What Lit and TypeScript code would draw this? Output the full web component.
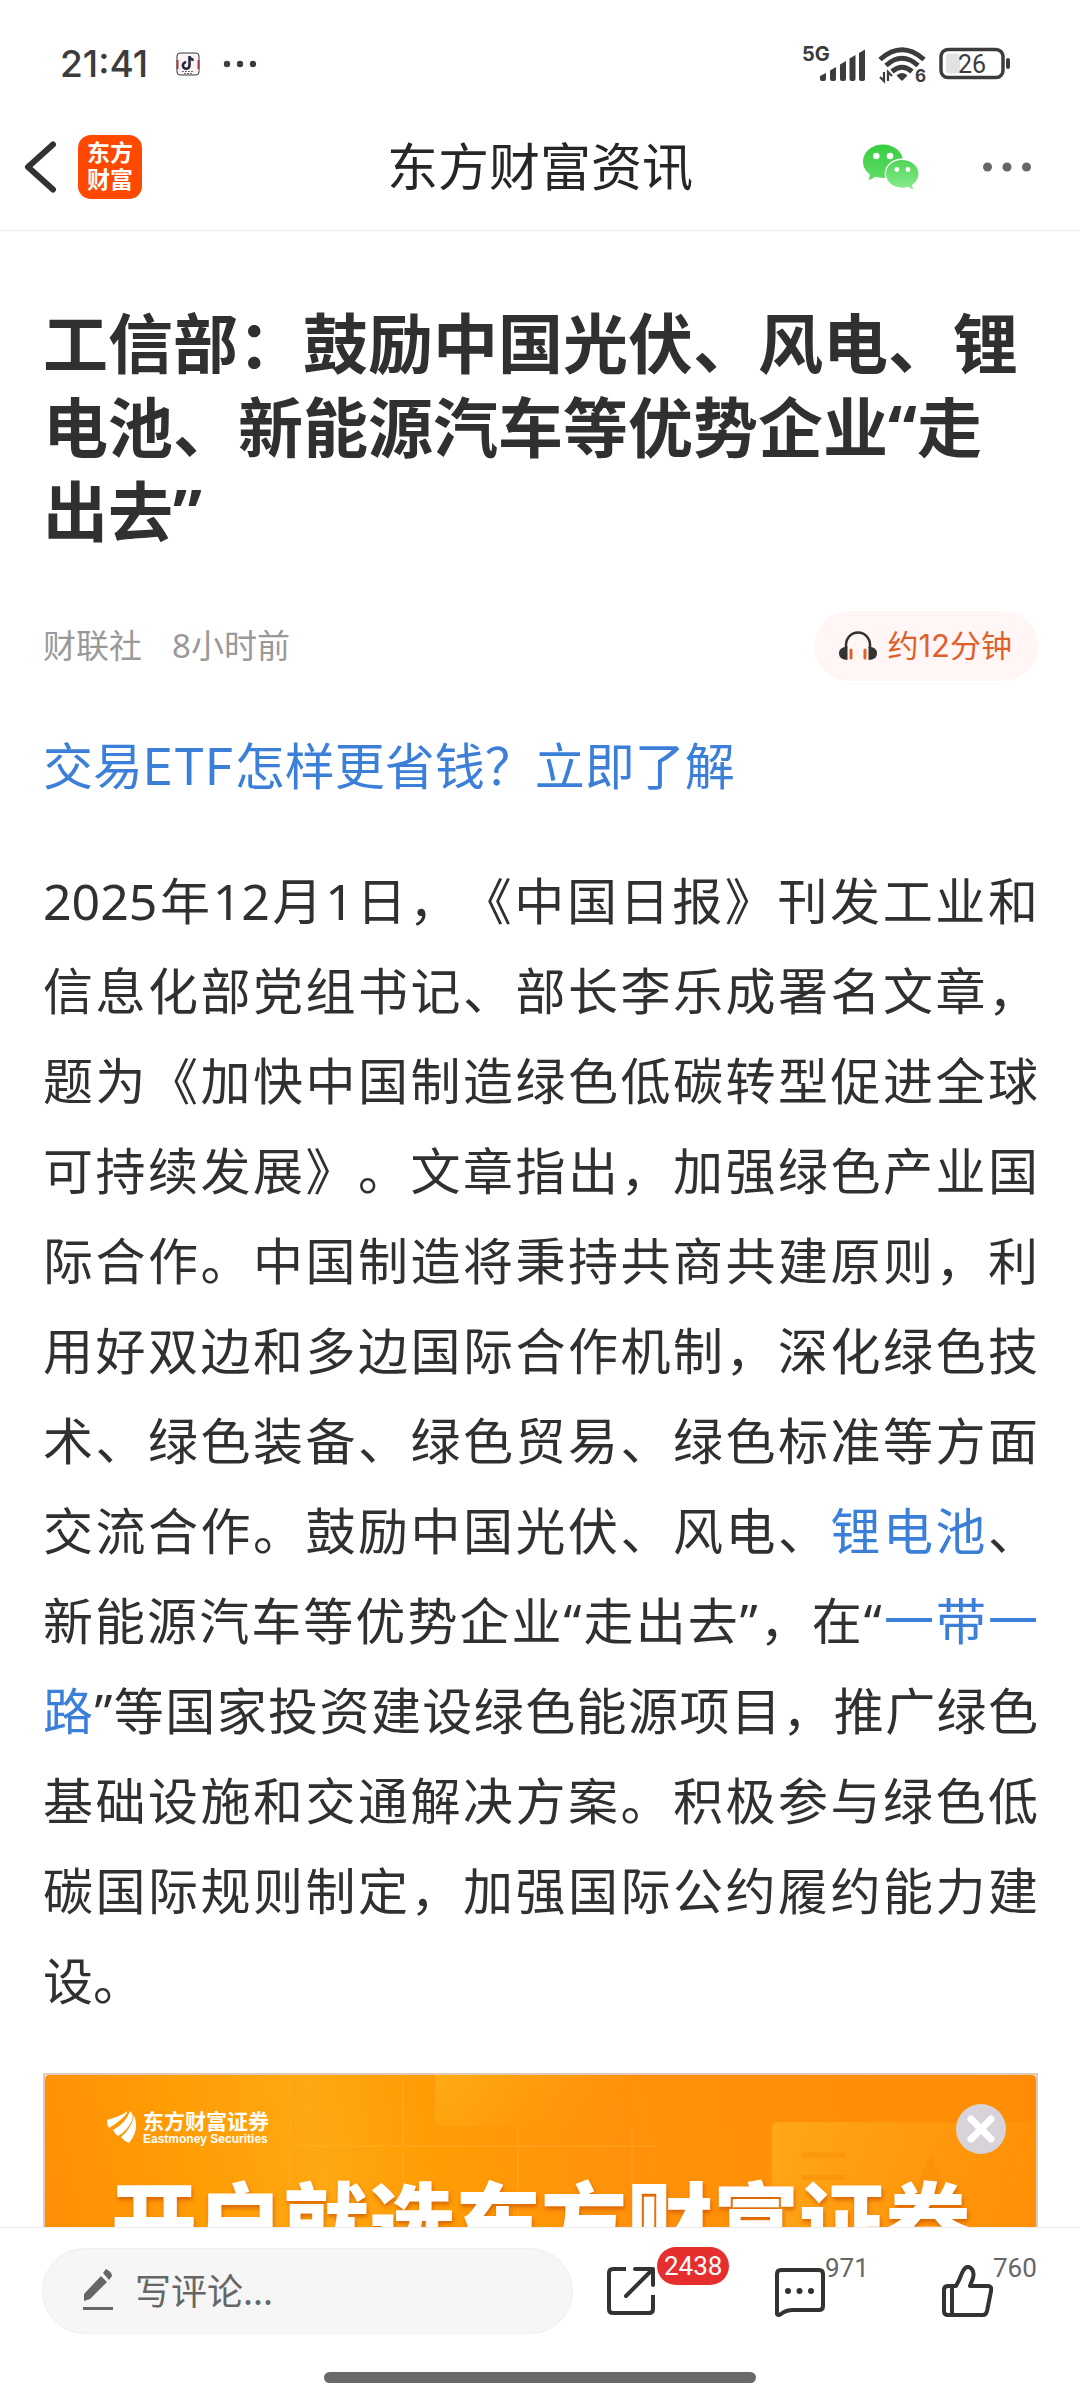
import { LitElement, css, html, svg } from "lit";
import { customElement, property } from "lit/decorators.js";

const BODY_BEFORE =
  "2025年12月1日，《中国日报》刊发工业和信息化部党组书记、部长李乐成署名文章，题为《加快中国制造绿色低碳转型促进全球可持续发展》。文章指出，加强绿色产业国际合作。中国制造将秉持共商共建原则，利用好双边和多边国际合作机制，深化绿色技术、绿色装备、绿色贸易、绿色标准等方面交流合作。鼓励中国光伏、风电、";
const BODY_MIDDLE = "、新能源汽车等优势企业“走出去”，在“";
const BODY_AFTER =
  "”等国家投资建设绿色能源项目，推广绿色基础设施和交通解决方案。积极参与绿色低碳国际规则制定，加强国际公约履约能力建设。";

@customElement("status-bar")
class StatusBar extends LitElement {
  static styles = css`
    :host {
      display: flex;
      align-items: center;
      justify-content: space-between;
      height: 80px;
      padding: 24px 69px 0 60px;
      color: #3c3c3c;
    }
    .group {
      display: flex;
      align-items: center;
    }
    .time {
      font: 500 37px/48px Inter, sans-serif;
      margin-right: 28px;
    }
    .dots {
      margin-left: 22px;
    }
    .right {
      gap: 13px;
    }
    .label {
      font-family: Inter, sans-serif;
      font-weight: 700;
      fill: currentColor;
    }
    .level {
      font-family: Roboto, sans-serif;
      fill: currentColor;
    }
    svg {
      display: block;
      overflow: visible;
    }
  `;

  render() {
    return html`
      <div class="group">
        <span class="time">21:41</span>
        <svg width="24" height="24" viewBox="0 0 24 24">
          <rect x="1" y="1" width="22" height="22" rx="3" fill="#fdf3f2" stroke="#34384a" stroke-width="1" />
          <path d="M1.5 8v9M22.5 8v9" stroke="#a83a44" stroke-width="2" />
          <path d="M13.5 4v9.5a3.3 3.3 0 1 1-3.3-3.3M13.5 4.5c.5 2 2 3.2 4.2 3.4" fill="none" stroke="#262a40" stroke-width="2.6" />
          <path d="M6 19.5h12M8 21.5h8" stroke="#70707c" stroke-width="1" stroke-dasharray="2 1" />
        </svg>
        <svg class="dots" width="36" height="8" viewBox="0 0 36 8" fill="currentColor">
          <circle cx="5" cy="4" r="3.2" /><circle cx="18" cy="4" r="3.2" /><circle cx="31" cy="4" r="3.2" />
        </svg>
      </div>
      <div class="group right">
        <svg width="62" height="36" viewBox="0 0 62 36" fill="currentColor">
          <text class="label" x="-1" y="15" font-size="20">5G</text>
          <path d="M17 30l6-3v6a2 2 0 0 1-2 2h-2a2 2 0 0 1-2-2zM27 24.5l6-3.5v12a2 2 0 0 1-2 2h-2a2 2 0 0 1-2-2zM37 18.5l6-3.5v18a2 2 0 0 1-2 2h-2a2 2 0 0 1-2-2zM46.5 12.5l6-3.500v24a2 2 0 0 1-2 2h-2a2 2 0 0 1-2-2zM56 7l6-3.5v29.5a2 2 0 0 1-2 2h-2a2 2 0 0 1-2-2z" />
        </svg>
        <svg width="48" height="36" viewBox="0 0 48 36">
          <g fill="none" stroke="currentColor" stroke-width="5">
            <path d="M2 13.5Q24-6 46 13.5" />
            <path d="M8 19.5Q24 5 40 19.5" />
            <path d="M14 25.5Q24 17 34 25.5" />
          </g>
          <path d="M24 34l-4.5-4.5q4.5-3.5 9 0z" fill="currentColor" stroke="currentColor" stroke-width="1.5" stroke-linejoin="round" />
          <path d="M6 26v9l-4-4M10 35v-9l4 4" fill="none" stroke="currentColor" stroke-width="2.2" />
          <text class="label" x="37" y="36" font-size="17">6</text>
        </svg>
        <svg width="72" height="36" viewBox="0 0 72 36">
          <rect x="2" y="3.5" width="62" height="28" rx="7" fill="none" stroke="currentColor" stroke-width="3.5" />
          <rect x="7" y="7.5" width="14" height="20" rx="3" fill="#e2e2e2" />
          <rect x="67" y="12" width="4" height="11" rx="2" fill="currentColor" />
          <text class="level" x="19" y="26.500" font-size="25">26</text>
        </svg>
      </div>
    `;
  }
}

@customElement("app-header")
class AppHeader extends LitElement {
  static styles = css`
    :host {
      display: grid;
      grid-template-columns: 1fr auto 1fr;
      align-items: center;
      height: 126px;
      border-bottom: 1px solid #ececec;
      padding: 0 46px 0 22px;
      color: #262626;
    }
    .left,
    .right {
      display: flex;
      align-items: center;
    }
    .left {
      gap: 20px;
    }
    .right {
      justify-content: flex-end;
      gap: 62px;
    }
    button {
      border: 0;
      padding: 0;
      background: none;
      color: inherit;
      display: block;
    }
    svg {
      display: block;
    }
    .logo {
      display: grid;
      place-content: center;
      box-sizing: border-box;
      width: 64px;
      height: 64px;
      padding-bottom: 4px;
      border-radius: 13px;
      background: #ff4800;
      color: #fff;
      font: 700 23px/27px "Noto Sans CJK SC", sans-serif;
      text-decoration: none;
    }
    h1 {
      margin: 0 -24px 0 0;
      padding-bottom: 6px;
      font: 400 51px/72px "Noto Sans CJK SC", sans-serif;
    }
  `;

  render() {
    return html`
      <div class="left">
        <button aria-label="返回">
          <svg width="36" height="56" viewBox="0 0 36 56" fill="none" stroke="#333" stroke-width="6" stroke-linecap="round" stroke-linejoin="round">
            <path d="M31 5.500L6 28l25 22.5" />
          </svg>
        </button>
        <a class="logo" href="#"><span>东方</span><span>财富</span></a>
      </div>
      <h1>东方财富资讯</h1>
      <div class="right">
        <button aria-label="微信">
          <svg width="58" height="48" viewBox="0 0 58 48">
            <defs>
              <linearGradient id="g1" x1="0" y1="0" x2="0" y2="1"><stop offset="0" stop-color="#36ce3f" /><stop offset="1" stop-color="#62dc68" /></linearGradient>
              <linearGradient id="g2" x1="0" y1="0" x2="0" y2="1"><stop offset="0" stop-color="#50d658" /><stop offset="1" stop-color="#8aea8f" /></linearGradient>
            </defs>
            <path d="M21 1.5C9.5 1.5 1 9.2 1 18.5c0 5.3 2.7 9.8 7 13L6.5 37.5l7-3.7c2.4.7 4.8 1.1 7.5 1.1 11.5 0 20-7.3 20-16.4S32.5 1.5 21 1.5z" fill="url(#g1)" />
            <path d="M40 15.5c-9.7 0-17.3 6.7-17.3 15.3S30.3 46.2 40 46.2c2 0 4-.3 5.800-.9l6.2 3-1.2-5.2c4-2.7 6.5-7.2 6.5-12.3 0-8.600-7.6-15.3-17.3-15.3z" fill="#fff" />
            <path d="M40 17c-9 0-16 6-16 13.8s7 13.9 16 13.9c2 0 4-.3 6-1l5 2.8-1-4.6c4-2.5 6.5-6.6 6.5-11.1C56.5 23 49 17 40 17z" fill="url(#g2)" />
            <g fill="#fff"><circle cx="14.3" cy="13" r="3.3" /><circle cx="28" cy="13" r="3.3" /><circle cx="34.8" cy="26.5" r="2.4" /><circle cx="46" cy="26.5" r="2.4" /></g>
          </svg>
        </button>
        <button aria-label="更多">
          <svg width="52" height="20" viewBox="0 0 52 20" fill="#666"><circle cx="5.5" cy="10" r="4.5" /><circle cx="25" cy="10" r="4.5" /><circle cx="44.5" cy="10" r="4.5" /></svg>
        </button>
      </div>
    `;
  }
}

@customElement("promo-banner")
class PromoBanner extends LitElement {
  static styles = css`
    :host {
      display: block;
      position: relative;
      border: 2px solid #dccbb8;
      background: #fff;
    }
    .card {
      position: relative;
      overflow: hidden;
      border-radius: 4px;
      padding: 33px 60px 60px 62px;
      background: linear-gradient(78deg, #ff8c06 0%, #ff9d04 17%, #ffa812 30%, #ff9d04 40%, #ff920a 58%, #ff8c04 100%);
      color: #fff;
    }
    .art {
      position: absolute;
      inset: 0;
      width: 100%;
      height: 100%;
    }
    .brand {
      position: relative;
      display: flex;
      align-items: center;
      gap: 6px;
    }
    .brand svg {
      display: block;
    }
    .cn {
      display: block;
      font: 700 21px/24px "Noto Sans CJK SC", sans-serif;
    }
    .en {
      display: block;
      font: 700 12px/14px "Liberation Sans", sans-serif;
    }
    .headline {
      position: relative;
      margin: 17px 0 0;
      padding-left: 4px;
      font: 900 86px/110px "Noto Sans CJK SC", sans-serif;
      white-space: nowrap;
      text-shadow: 1px 3px 4px rgba(196, 72, 0, 0.65);
    }
    .close {
      position: absolute;
      top: 29px;
      right: 30px;
      width: 50px;
      height: 50px;
      border: 0;
      border-radius: 50%;
      padding: 0;
      background: #d8d3d8;
    }
    .close svg {
      display: block;
    }
  `;

  render() {
    return html`
      <div class="card">
        <svg class="art" viewBox="0 0 990 240" preserveAspectRatio="xMinYMin slice">
          <defs>
            <linearGradient id="panel" x1="0" y1="0" x2="1" y2="0.3">
              <stop offset="0" stop-color="#ffb01c" stop-opacity=".75" />
              <stop offset="1" stop-color="#ffa010" stop-opacity="0" />
            </linearGradient>
          </defs>
          <path d="M363 0h180l-40 48H369q-6 0-6-6z" fill="url(#panel)" />
          <path d="M228 0v240M228 66h340M333 0v240M440 48v190M546 50v190" stroke="#ffb640" stroke-width="2" opacity=".25" fill="none" />
          <path d="M676 240V50q0-6 6-6h308v196z" fill="url(#panel)" />
          <path d="M704 72h40v5h-40zM704 93h40v5h-40zM824 74l14 32h-28z" fill="#f98f0a" opacity=".6" />
        </svg>
        <div class="brand">
          <svg width="30" height="34" viewBox="0 0 30 34" fill="#fff">
            <path d="M0 10Q12 7 21 1Q17 9 2 18Q0 15 0 10z" />
            <path d="M6 20Q19 13 23 1Q27 4 25 10Q21 20 11 26Q8 24 6 20z" />
            <path d="M14 27Q25 18 27 5Q33 20 22 33Q17 31 14 27z" />
          </svg>
          <div>
            <span class="cn">东方财富证券</span>
            <span class="en">Eastmoney Securities</span>
          </div>
        </div>
        <p class="headline">开户就选东方财富证券</p>
      </div>
      <button class="close" aria-label="关闭">
        <svg width="50" height="50" viewBox="0 0 50 50"><path d="M15 15l20 20M35 15L15 35" stroke="#fff" stroke-width="7" stroke-linecap="round" /></svg>
      </button>
    `;
  }
}

const ICONS = {
  share: svg`<path d="M21 4H8Q4 4 4 8V44Q4 48 8 48H44Q48 48 48 44V30" /><path d="M30 4H48V20M47 5L21 31" stroke-linecap="round" />`,
  comment: svg`<path d="M4 49V9Q4 5 8 5H46Q50 5 50 9V41Q50 45 46 45H20Q13 45 8 49Q5 51 4 49z" /><g fill="#333" stroke="none"><circle cx="15" cy="26" r="3" /><circle cx="26.5" cy="26" r="3" /><circle cx="38" cy="26" r="3" /></g>`,
  like: svg`<path d="M7 21H15Q18 16 21 8Q24 1 28 2Q34 5 32 13L29 21H47Q51 21 50 26L46 46Q45 50 42 50H7Q3 50 3 46V25Q3 21 7 21zM11 21V50" />`,
};

@customElement("action-button")
class ActionButton extends LitElement {
  @property() icon: keyof typeof ICONS = "share";
  @property() count = "";
  @property() label = "";
  @property({ type: Boolean }) hot = false;

  static styles = css`
    button {
      position: relative;
      display: block;
      border: 0;
      padding: 0;
      background: none;
    }
    svg {
      display: block;
    }
    .count {
      position: absolute;
      left: 100%;
      bottom: 34px;
      color: #666;
      font: 400 26px/30px Roboto, sans-serif;
    }
    .hot {
      bottom: 32px;
      border-radius: 19px;
      padding: 4px 7px;
      background: #e62e2e;
      color: #fff;
    }
  `;

  render() {
    return html`
      <button aria-label=${this.label}>
        <svg width="52" height="52" viewBox="0 0 52 52" fill="none" stroke="#333" stroke-width="4" stroke-linejoin="round">
          ${ICONS[this.icon]}
        </svg>
        <span class=${this.hot ? "count hot" : "count"}>${this.count}</span>
      </button>
    `;
  }
}

@customElement("comment-bar")
class CommentBar extends LitElement {
  static styles = css`
    :host {
      display: block;
      border-top: 1px solid #ececec;
      padding: 20px 0 17px;
      background: #fff;
    }
    .row {
      display: flex;
      align-items: center;
      gap: 32px;
      padding: 0 87px 0 42px;
    }
    .field {
      flex: 1;
      min-width: 0;
      box-sizing: border-box;
      display: flex;
      align-items: center;
      gap: 20px;
      height: 86px;
      padding: 0 38px 4px;
      border: 1px solid #eee;
      border-radius: 43px;
      background: #f6f6f6;
    }
    .field svg {
      flex: none;
    }
    input {
      flex: 1;
      min-width: 0;
      border: 0;
      padding: 0;
      outline: 0;
      background: none;
      font: 400 36px/52px "Noto Sans CJK SC", sans-serif;
      color: #333;
    }
    input::placeholder {
      color: #666;
      opacity: 1;
    }
    .actions {
      display: flex;
      gap: 116px;
    }
    .home {
      width: 40%;
      height: 11px;
      margin: 38px auto 0;
      border-radius: 6px;
      background: #6b696c;
    }
  `;

  render() {
    return html`
      <div class="row">
        <label class="field">
          <svg width="34" height="44" viewBox="0 0 34 44" fill="#666">
            <path d="M3 34V27L20 9L26 15L9 32zM22 6L25 2Q31 5 31 9L28 13z" />
            <path d="M2 40h30v3H2z" />
          </svg>
          <input type="text" placeholder="写评论..." aria-label="写评论" />
        </label>
        <div class="actions">
          <action-button icon="share" count="2438" label="分享" hot></action-button>
          <action-button icon="comment" count="971" label="评论"></action-button>
          <action-button icon="like" count="760" label="点赞"></action-button>
        </div>
      </div>
      <div class="home"></div>
    `;
  }
}

@customElement("app-root")
class AppRoot extends LitElement {
  static styles = css`
    :host {
      display: flex;
      flex-direction: column;
      height: 100vh;
      background: #fff;
      color: #303030;
      font-family: "Noto Sans", "Noto Sans CJK SC", sans-serif;
      text-spacing-trim: space-all;
    }
    status-bar,
    app-header,
    comment-bar {
      flex: none;
    }
    main {
      flex: 1;
      min-height: 0;
      overflow-y: auto;
      scrollbar-width: none;
      padding: 70px 42px 0 43px;
    }
    h2 {
      margin: 0;
      font-size: 65px;
      line-height: 84px;
      font-weight: 700;
    }
    .meta {
      display: flex;
      align-items: center;
      justify-content: space-between;
      margin-top: 58px;
      color: #999;
      font-size: 33px;
      line-height: 48px;
    }
    .source {
      display: flex;
      gap: 30px;
    }
    .listen {
      display: flex;
      align-items: center;
      gap: 10px;
      height: 70px;
      border: 0;
      border-radius: 35px;
      padding: 0 26px 0 25px;
      background: #fff6f5;
      color: #e0602a;
      font: 400 31px/48px Inter, "Noto Sans CJK SC", sans-serif;
    }
    a {
      color: #3c7fd8;
      text-decoration: none;
    }
    .promo {
      margin: 50px 0 0;
      font-family: Inter, "Noto Sans CJK SC", sans-serif;
      font-size: 50px;
      line-height: 72px;
    }
    .body {
      margin: 53px 0 47px;
      font-size: 50px;
      line-height: 90px;
      text-align: justify;
    }
  `;

  render() {
    return html`
      <status-bar></status-bar>
      <app-header></app-header>
      <main>
        <article>
          <h2>工信部：鼓励中国光伏、风电、锂电池、新能源汽车等优势企业“走出去”</h2>
          <div class="meta">
            <div class="source"><span>财联社</span><span>8小时前</span></div>
            <button class="listen">
              <svg width="38" height="32" viewBox="0 0 38 32">
                <path d="M7 18V15a12 12.5 0 0 1 24 0v3" fill="none" stroke="#333" stroke-width="2.5" />
                <path d="M8.5 16.5V30Q0 30 0 23.5T8.5 16.5zM29.5 16.5V30Q38 30 38 23.5T29.5 16.5z" fill="#333" />
                <path d="M12 20v8M26 20v8" stroke="#e0602a" stroke-width="3" stroke-linecap="round" />
              </svg>
              约12分钟
            </button>
          </div>
          <p class="promo"><a href="#">交易ETF怎样更省钱？立即了解</a></p>
          <p class="body">${BODY_BEFORE}<a href="#">锂电池</a>${BODY_MIDDLE}<a href="#">一带一路</a>${BODY_AFTER}</p>
        </article>
        <promo-banner></promo-banner>
      </main>
      <comment-bar></comment-bar>
    `;
  }
}
